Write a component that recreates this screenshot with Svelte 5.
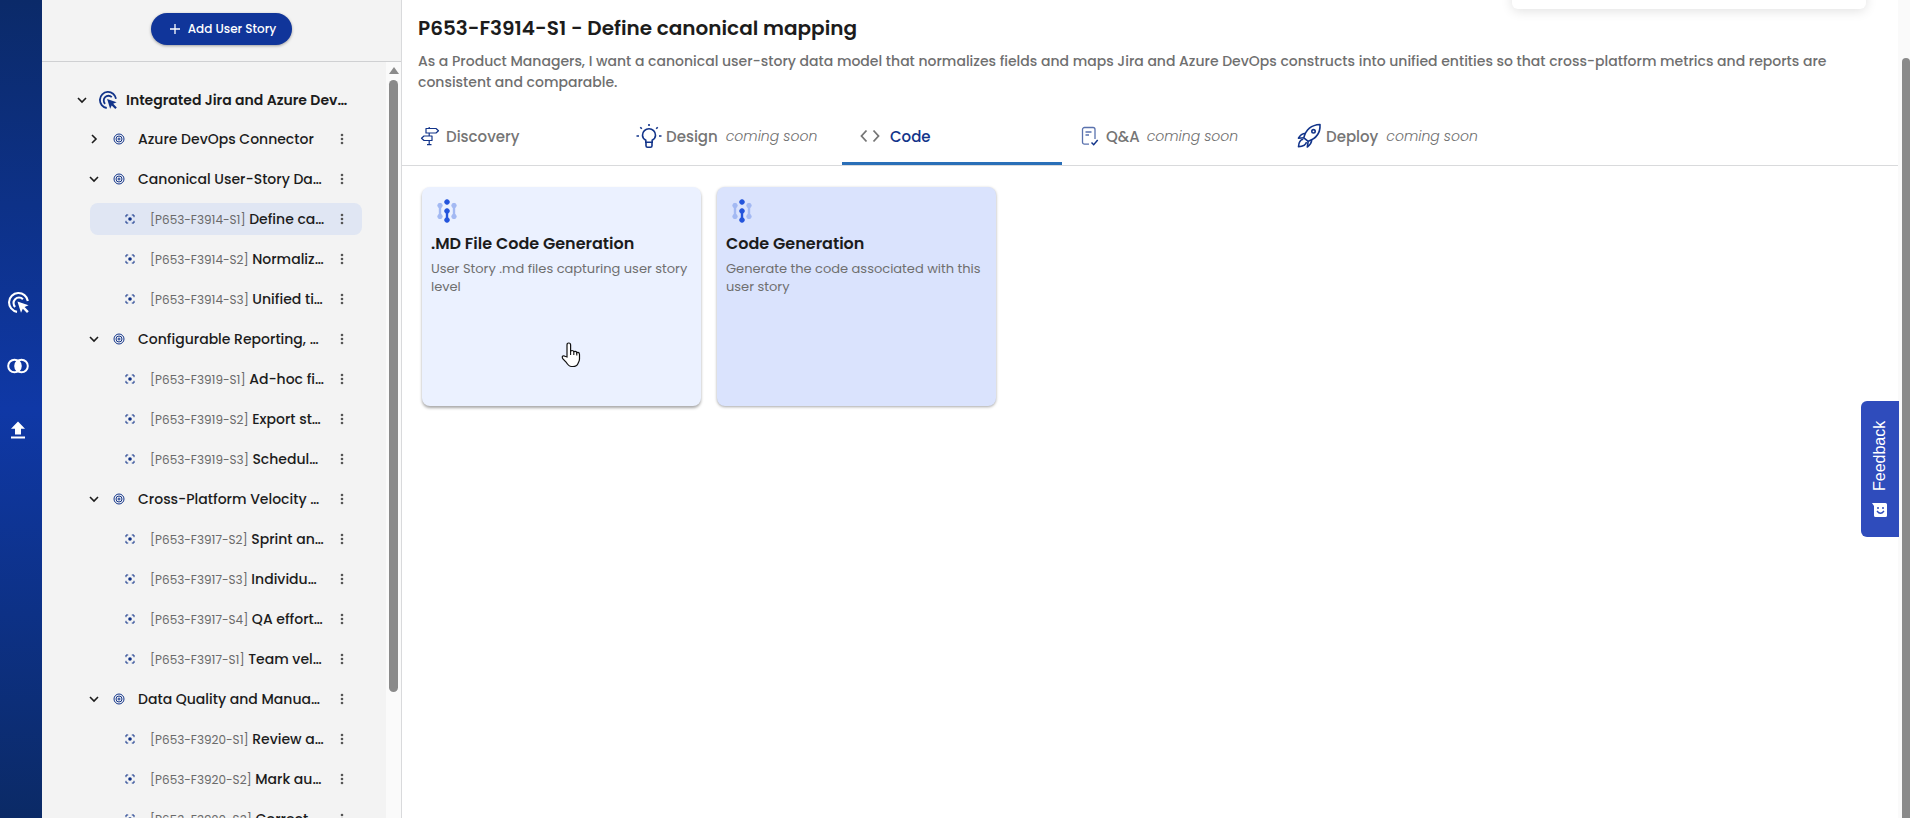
<script lang="ts">
  type Story = { id: string; title: string };
  type Feature = { title: string; open: boolean; stories: Story[] };

  const features: Feature[] = [
    { title: 'Azure DevOps Connector', open: false, stories: [] },
    {
      title: 'Canonical User-Story Da…',
      open: true,
      stories: [
        { id: 'P653-F3914-S1', title: 'Define ca…' },
        { id: 'P653-F3914-S2', title: 'Normaliz…' },
        { id: 'P653-F3914-S3', title: 'Unified ti…' }
      ]
    },
    {
      title: 'Configurable Reporting, …',
      open: true,
      stories: [
        { id: 'P653-F3919-S1', title: 'Ad-hoc fi…' },
        { id: 'P653-F3919-S2', title: 'Export st…' },
        { id: 'P653-F3919-S3', title: 'Schedul…' }
      ]
    },
    {
      title: 'Cross-Platform Velocity …',
      open: true,
      stories: [
        { id: 'P653-F3917-S2', title: 'Sprint an…' },
        { id: 'P653-F3917-S3', title: 'Individu…' },
        { id: 'P653-F3917-S4', title: 'QA effort…' },
        { id: 'P653-F3917-S1', title: 'Team vel…' }
      ]
    },
    {
      title: 'Data Quality and Manua…',
      open: true,
      stories: [
        { id: 'P653-F3920-S1', title: 'Review a…' },
        { id: 'P653-F3920-S2', title: 'Mark au…' },
        { id: 'P653-F3920-S3', title: 'Correct…' }
      ]
    }
  ];

  const tabs = [
    { id: 'discovery', label: 'Discovery', soon: false },
    { id: 'design', label: 'Design', soon: true },
    { id: 'code', label: 'Code', soon: false },
    { id: 'qa', label: 'Q&A', soon: true },
    { id: 'deploy', label: 'Deploy', soon: true }
  ];

  const cards = [
    { title: '.MD File Code Generation', text: 'User Story .md files capturing user story level' },
    { title: 'Code Generation', text: 'Generate the code associated with this user story' }
  ];

  let selected = $state('P653-F3914-S1');
  let activeTab = $state('code');
</script>

{#snippet adsClick(size: number)}
  <svg width={size} height={size} viewBox="0 0 20 20" fill="none" stroke="currentColor" stroke-width="2" aria-hidden="true">
    <path d="M8.6 18.9A9 9 0 1 1 18.9 8.6" />
    <path d="M6.8 14.2A5.2 5.2 0 1 1 14.2 6.8" />
    <path d="M9 9l10.6 3.6-3.8 1.7 4 4-1.7 1.7-4-4-1.7 3.8z" fill="currentColor" stroke="none" />
  </svg>
{/snippet}

{#snippet chevron(open: boolean)}
  <svg class="chevron" width="16" height="16" viewBox="0 0 16 16" fill="none" stroke="currentColor" stroke-width="1.6" aria-hidden="true">
    <path d={open ? 'M4 6l4 4 4-4' : 'M6 4l4 4-4 4'} />
  </svg>
{/snippet}

{#snippet menuButton(label: string)}
  <button class="menu" aria-label="Options for {label}">
    <svg width="4" height="14" viewBox="0 0 4 14" fill="currentColor" aria-hidden="true">
      <circle cx="2" cy="3" r="1.3" /><circle cx="2" cy="7" r="1.3" /><circle cx="2" cy="11" r="1.3" />
    </svg>
  </button>
{/snippet}

{#snippet tabIcon(id: string)}
  {#if id === 'discovery'}
    <svg width="20" height="20" viewBox="0 0 20 20" fill="none" stroke="currentColor" stroke-width="1.2" aria-hidden="true">
      <path d="M9.2 1v1.5M9.2 7v3M9.2 14.5v4M7 18.7h4.5M6 2.5h10l2.5 2.2L16 7H6z" stroke-linejoin="round" />
      <path d="M12 10H4l-2.5 2.2L4 14.5h8z" stroke-linejoin="round" />
    </svg>
  {:else if id === 'design'}
    <svg width="26" height="26" viewBox="0 0 26 26" fill="none" stroke="currentColor" stroke-width="1.6" aria-hidden="true">
      <path d="M9.8 19.3v-2.1c-2-1.1-3.3-2.7-3.3-5a6.5 6.5 0 0 1 13 0c0 2.3-1.3 3.9-3.3 5v2.1zM10 19.5v3.2q0 1.5 1.5 1.5h3q1.5 0 1.5-1.5v-3.2" />
      <path d="M13 1v2M.5 13H3M23 13h2.5M4.3 4.3l1.5 1.5M21.7 4.3l-1.5 1.5" />
    </svg>
  {:else if id === 'code'}
    <svg width="20" height="14" viewBox="0 0 20 14" fill="none" stroke="#757575" stroke-width="1.8" aria-hidden="true">
      <path d="M6.5 1.5L1.5 7l5 5.5M13.5 1.5l5 5.5-5 5.5" />
    </svg>
  {:else if id === 'qa'}
    <svg width="18" height="20" viewBox="0 0 18 20" fill="none" stroke="currentColor" stroke-width="1.3" aria-hidden="true">
      <path d="M8 18.2H3.5a2 2 0 0 1-2-2V3.5a2 2 0 0 1 2-2H12a2 2 0 0 1 2 2V13" opacity="0.7" />
      <path d="M4.5 6h6M4.5 9H8" opacity="0.7" />
      <path d="M10.5 16.5l2.2 2.2 4-4.7" stroke-width="1.5" />
    </svg>
  {:else}
    <svg width="26" height="26" viewBox="0 0 26 26" fill="none" stroke="currentColor" stroke-width="1.6" stroke-linejoin="round" aria-hidden="true">
      <path d="M7.8 14.8C9.5 8 14.5 2 24 1.500c.5 9-5 14.500-11.800 16.800z" />
      <circle cx="17.5" cy="8.3" r="1.7" />
      <path d="M9.7 10.2c-3.700.3-5.700 2-7.200 5l5.300-.4M15.700 16.300c0 3.200-1.500 5.700-4.400 7.700l.9-5.700" />
      <path d="M7.3 16.3c-3 .4-4.600 3.700-4.800 7.400 3.800-.2 7.300-1.500 8-4.600" />
    </svg>
  {/if}
{/snippet}

<div class="app">
  <nav class="rail" aria-label="Primary">
    <a href="#stories" aria-label="Stories">{@render adsClick(21)}</a>
    <a href="#integrations" aria-label="Integrations">
      <svg width="22" height="16" viewBox="0 0 22 16" fill="none" stroke="currentColor" stroke-width="2" aria-hidden="true">
        <circle cx="7.5" cy="8" r="6.3" />
        <circle cx="14.5" cy="8" r="6.3" />
        <path d="M11 3a6.3 6.3 0 0 1 0 10 6.3 6.3 0 0 1 0-10z" fill="currentColor" stroke-width="1" />
      </svg>
    </a>
    <a href="#upload" aria-label="Upload">
      <svg width="14" height="18" viewBox="0 0 14 18" fill="currentColor" aria-hidden="true">
        <path d="M7 .5l7 7.300h-4V13.500H4V7.800H0zM0 15.500h14v2H0z" />
      </svg>
    </a>
  </nav>

  <aside class="sidebar">
    <div class="sidebar-head">
      <button class="add">
        <svg width="10" height="10" viewBox="0 0 10 10" fill="none" stroke="currentColor" stroke-width="1.3" aria-hidden="true">
          <path d="M5 0v10M0 5h10" />
        </svg>
        Add User Story
      </button>
    </div>

    <div class="sidebar-body">
      <div class="tree">
        <div class="root">
          {@render chevron(true)}
          {@render adsClick(18)}
          <span>Integrated Jira and Azure Dev…</span>
        </div>

        {#each features as feature}
          <div class="row feature">
            <button class="label" aria-expanded={feature.open}>
              {@render chevron(feature.open)}
              <svg class="target" width="12" height="12" viewBox="0 0 12 12" fill="none" stroke="currentColor" aria-hidden="true">
                <circle cx="6" cy="6" r="5" /><circle cx="6" cy="6" r="3" /><circle cx="6" cy="6" r="1" />
              </svg>
              <span>{feature.title}</span>
            </button>
            {@render menuButton(feature.title)}
          </div>
          {#each feature.stories as story}
            <div class="row" class:selected={story.id === selected}>
              <button class="label" onclick={() => (selected = story.id)}>
                <svg class="focus" width="10" height="10" viewBox="0 0 10 10" fill="none" stroke="currentColor" aria-hidden="true">
                  <path d="M1 3.2V1h2.2M6.8 1H9v2.2M9 6.8V9H6.8M3.2 9H1V6.8" />
                  <circle cx="5" cy="5" r="1.8" fill="currentColor" stroke="none" />
                </svg>
                <span><small>[{story.id}]</small> {story.title}</span>
              </button>
              {@render menuButton(story.id)}
            </div>
          {/each}
        {/each}
      </div>

      <div class="scrollbar" aria-hidden="true">
        <div class="arrow"></div>
        <div class="thumb"></div>
      </div>
    </div>
  </aside>

  <main>
    <header>
      <h1>P653-F3914-S1 - Define canonical mapping</h1>
      <p>
        As a Product Managers, I want a canonical user-story data model that normalizes fields and maps Jira and Azure DevOps constructs into unified entities so that cross-platform metrics and reports are consistent and comparable.
      </p>
    </header>

    <div class="tabs" role="tablist">
      {#each tabs as tab}
        <button
          role="tab"
          class="tab {tab.id}"
          class:active={tab.id === activeTab}
          aria-selected={tab.id === activeTab}
          onclick={() => (activeTab = tab.id)}
        >
          {@render tabIcon(tab.id)}
          <span>{tab.label}</span>
          {#if tab.soon}<em>coming soon</em>{/if}
        </button>
      {/each}
    </div>

    <div class="cards">
      {#each cards as card, i}
        <button class="card" class:hovered={i === 0}>
          <svg width="20" height="24" viewBox="0 0 20 24" aria-hidden="true">
            <g fill="#a3b9f3" stroke="#a3b9f3">
              <path d="M3 6.5v11M17 6.5v11" stroke-width="2.4" />
              <circle cx="3" cy="6.5" r="2.2" /><circle cx="3" cy="17.5" r="2.2" />
              <circle cx="17" cy="6.5" r="2.2" /><circle cx="17" cy="17.5" r="2.2" />
            </g>
            <g fill="#2354dc" stroke="#2354dc">
              <path d="M10 12v9" stroke-width="2.4" />
              <circle cx="10" cy="3" r="2.3" /><circle cx="10" cy="12" r="2.3" /><circle cx="10" cy="21" r="2.3" />
            </g>
          </svg>
          <strong>{card.title}</strong>
          <span>{card.text}</span>
        </button>
      {/each}
    </div>
  </main>

  <div class="page-scroll" aria-hidden="true"><div></div></div>

  <div class="toast"></div>

  <button class="feedback">
    <svg width="15" height="14" viewBox="0 0 15 14" aria-hidden="true">
      <path d="M0 0h13.5Q15 0 15 1.5v11q0 1.5-1.5 1.5h-10Q2 14 2 12.5V3z" fill="#fff" />
      <path d="M5 8q3.5 4.5 7 0" fill="none" stroke="#2f4cbc" stroke-width="1.3" />
      <circle cx="6" cy="5" r="1" fill="#2f4cbc" /><circle cx="11" cy="5" r="1" fill="#2f4cbc" />
    </svg>
    Feedback
  </button>

  <svg class="pointer" width="20" height="26" viewBox="0 0 20 26" aria-hidden="true">
    <path
      d="M6 15V3q0-2 1.800-2t1.800 2v6.500q0-1 1.500-1t1.700 1.500q.2-.8 1.500-.7t1.500 1.500q.3-.6 1.300-.4 1.400.3 1.400 2V17c0 2-.8 3-1.500 4.500-.8 2-2.500 3-5 3h-1.500c-2.500 0-4-2-5.500-4.500L1.500 16.300c-1-2 1-3.200 2.500-2z"
      fill="#fff"
      stroke="#111"
      stroke-width="1.2"
    />
    <path d="M9.600 9v4M12.800 10v3M15.800 11v2.500" stroke="#111" stroke-width="1.1" />
  </svg>
</div>

<style>
  :global(body) {
    margin: 0;
    background: #fff;
  }

  .app {
    --ink: #1c1c1c;
    --muted: #6f6f6f;
    --navy: #12348a;
    --line: #d9dadc;
    position: relative;
    display: flex;
    height: 100vh;
    overflow: hidden;
    color: var(--ink);
    font-family: Poppins, Inter, sans-serif;
    font-size: 14px;
  }

  button {
    border: 0;
    padding: 0;
    background: none;
    color: inherit;
    font: inherit;
    text-align: left;
    cursor: pointer;
  }

  svg {
    flex: none;
  }

  .rail {
    flex: none;
    box-sizing: border-box;
    width: 42px;
    padding: 0 6px 86px 0;
    display: flex;
    flex-direction: column;
    align-items: center;
    justify-content: center;
    gap: 40px;
    background: linear-gradient(#0b2a69, #0f38a6 50%, #0b2a66);
  }

  .rail a {
    display: flex;
    align-items: center;
    height: 24px;
    color: #fff;
  }

  .sidebar {
    flex: none;
    width: 359px;
    display: flex;
    flex-direction: column;
    background: #f3f3f3;
    border-right: 1px solid var(--line);
  }

  .sidebar-head {
    flex: none;
    display: flex;
    justify-content: center;
    padding: 13px 0 16px;
    border-bottom: 1px solid #cfd0d2;
  }

  .add {
    display: flex;
    align-items: center;
    gap: 8px;
    height: 32px;
    padding: 0 16px 0 19px;
    border-radius: 16px;
    background: #10359a;
    color: #fff;
    font-size: 12px;
    font-weight: 500;
    box-shadow: 0 1px 3px rgba(0, 0, 0, 0.35);
  }

  .sidebar-body {
    flex: 1;
    min-height: 0;
    display: flex;
  }

  .tree {
    flex: 1;
    min-width: 0;
    padding: 22px 24px 0 32px;
    overflow: hidden;
    font-weight: 500;
  }

  .root {
    display: flex;
    align-items: center;
    height: 32px;
    margin-bottom: 7px;
    font-weight: 600;
    white-space: nowrap;
  }

  .root :global(svg + svg) {
    margin: 0 9px;
    color: var(--navy);
  }

  .row {
    display: flex;
    align-items: center;
    height: 32px;
    margin-bottom: 8px;
    margin-left: 16px;
    padding-right: 12px;
    border-radius: 8px;
  }

  .feature {
    margin-left: 12px;
  }

  .selected {
    background: #e0e6f3;
  }

  .label {
    flex: 1;
    min-width: 0;
    display: flex;
    align-items: center;
    white-space: nowrap;
  }

  .target {
    margin: 0 13px 0 11px;
    color: var(--navy);
  }

  .focus {
    margin: 0 15px 0 35px;
    color: var(--navy);
  }

  small {
    color: #6a6a6a;
    font-size: 12px;
    font-weight: 400;
  }

  .menu {
    flex: none;
    width: 16px;
    display: flex;
    justify-content: center;
    color: #555;
  }

  .scrollbar {
    flex: none;
    width: 15px;
    display: flex;
    flex-direction: column;
    align-items: center;
    background: #fafafa;
  }

  .arrow {
    margin: 5px 0 6px;
    border: 5px solid transparent;
    border-top: 0;
    border-bottom: 7px solid #8a8a8a;
  }

  .thumb {
    width: 9px;
    height: 81%;
    border-radius: 5px;
    background: #8a8a8a;
  }

  main {
    flex: 1;
    min-width: 0;
  }

  header {
    padding: 12px 60px 0 16px;
  }

  h1 {
    margin: 0;
    font-size: 20px;
    line-height: 32px;
    font-weight: 600;
  }

  header p {
    margin: 7px 0 0;
    color: var(--muted);
    font-weight: 500;
    line-height: 21px;
  }

  .tabs {
    display: flex;
    margin-top: 15px;
    border-bottom: 1px solid var(--line);
  }

  .tab {
    box-sizing: border-box;
    width: 220px;
    height: 57px;
    display: flex;
    align-items: center;
    gap: 6px;
    padding: 2px 0 0 18px;
    border-bottom: 3px solid transparent;
    color: var(--navy);
    font-size: 15px;
    font-weight: 500;
  }

  .tab span {
    color: #757575;
  }

  .tab em {
    color: var(--muted);
    font-size: 14px;
    font-weight: 300;
  }

  .design,
  .deploy {
    gap: 4px;
    padding-left: 14px;
  }

  .tab.design em,
  .tab.deploy em {
    margin-left: 4px;
  }

  .qa {
    gap: 7px;
    padding-left: 19px;
  }

  .code {
    gap: 10px;
  }

  .active {
    border-bottom-color: #2a6fb8;
  }

  .active span {
    color: var(--navy);
  }

  .cards {
    display: flex;
    flex-wrap: wrap;
    gap: 16px;
    padding: 21px 20px;
  }

  .card {
    box-sizing: border-box;
    width: 279px;
    min-height: 219px;
    display: flex;
    flex-direction: column;
    padding: 12px 9px;
    border-radius: 8px;
    background: #dae3fd;
    box-shadow: 0 1px 3px rgba(0, 0, 0, 0.35);
  }

  .card.hovered {
    background: #ebf1ff;
    box-shadow: 0 2px 3px rgba(0, 0, 0, 0.35);
  }

  .card svg {
    margin-left: 6px;
  }

  .card strong {
    margin-top: 9px;
    font-size: 16px;
    line-height: 24px;
    font-weight: 600;
  }

  .card span {
    margin-top: 4px;
    color: var(--muted);
    font-size: 13px;
    line-height: 18px;
  }

  .page-scroll {
    flex: none;
    box-sizing: border-box;
    width: 12px;
    padding: 58px 0 0 4px;
    background: #fafafa;
  }

  .page-scroll div {
    height: 100%;
    border-radius: 5px 5px 0 0;
    background: #8a8a8a;
  }

  .toast {
    position: absolute;
    top: -31px;
    right: 44px;
    width: 354px;
    height: 40px;
    border-radius: 6px;
    background: #fff;
    box-shadow: 0 2px 12px rgba(0, 0, 0, 0.12);
  }

  .feedback {
    position: absolute;
    top: 401px;
    right: 11px;
    box-sizing: border-box;
    width: 38px;
    height: 136px;
    display: flex;
    align-items: center;
    justify-content: center;
    gap: 12px;
    border-radius: 0 6px 6px 0;
    background: #2f4cbc;
    color: #fff;
    font-family: "Liberation Sans", sans-serif;
    font-size: 16px;
    writing-mode: vertical-rl;
    transform: rotate(180deg);
  }

  .feedback svg {
    transform: rotate(180deg);
  }

  .pointer {
    position: absolute;
    top: 342px;
    left: 561px;
  }
</style>
